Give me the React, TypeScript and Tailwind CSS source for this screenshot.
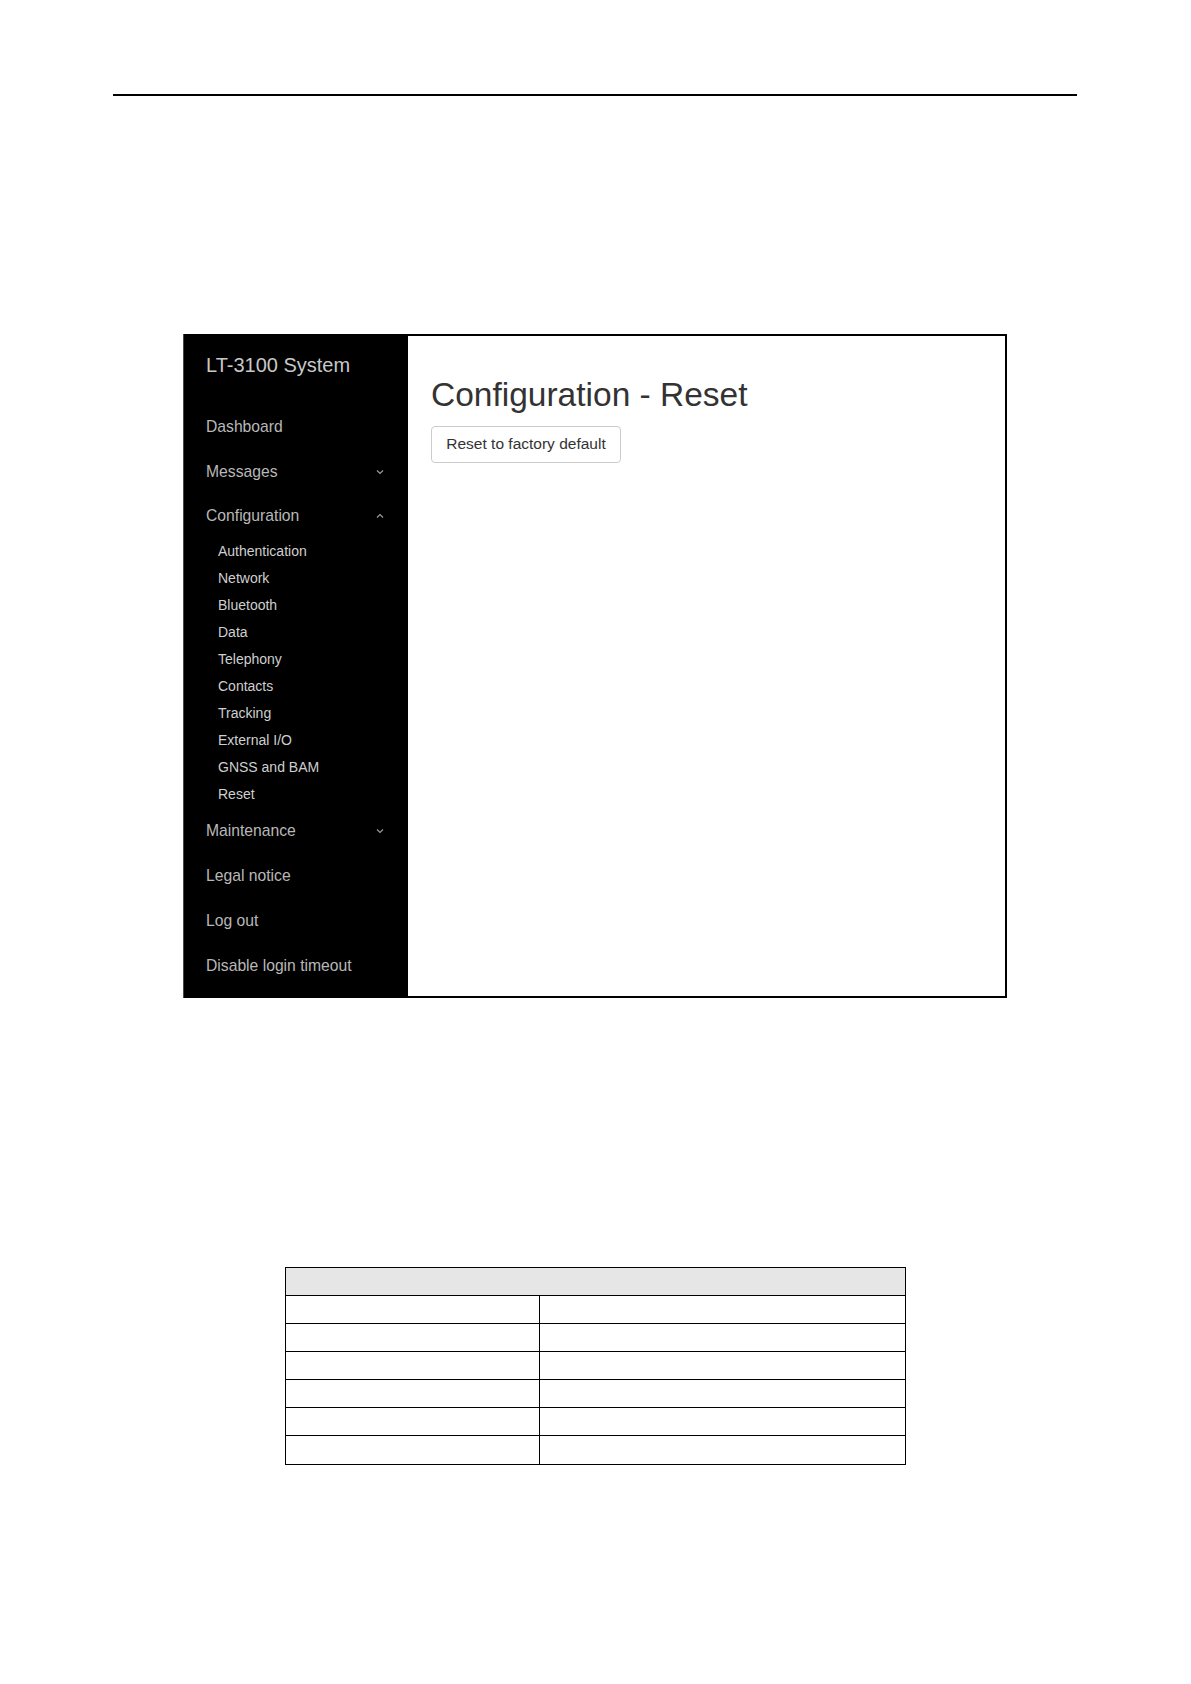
import React from "react";

const font = { fontFamily: '"Liberation Sans", Arial, sans-serif' };

function ChevronDown() {
  return (
    <svg width="8" height="6" viewBox="0 0 8 6" className="shrink-0">
      <path d="M1 1.5 L4 4.5 L7 1.5" fill="none" stroke="#9a9a9a" strokeWidth="1.2" />
    </svg>
  );
}
function ChevronUp() {
  return (
    <svg width="8" height="6" viewBox="0 0 8 6" className="shrink-0">
      <path d="M1 4.5 L4 1.5 L7 4.5" fill="none" stroke="#9a9a9a" strokeWidth="1.2" />
    </svg>
  );
}

function MainItem({ label, chevron, h = "h-[45px]" }: { label: string; chevron?: "up" | "down"; h?: string }) {
  return (
    <div className={`flex items-center justify-between pl-[22px] pr-[24px] ${h} text-[15.7px] text-[#b8b8b8]`}>
      <span>{label}</span>
      {chevron === "down" && <ChevronDown />}
      {chevron === "up" && <ChevronUp />}
    </div>
  );
}

const subItems = [
  "Authentication",
  "Network",
  "Bluetooth",
  "Data",
  "Telephony",
  "Contacts",
  "Tracking",
  "External I/O",
  "GNSS and BAM",
  "Reset",
];

export default function App() {
  return (
    <div className="w-[1191px] h-[1684px] bg-white flex flex-col" style={font}>
      <div className="mt-[94px] ml-[113px] w-[964px] h-[2px] bg-black" />

      <div className="mt-[238px] ml-[183px] w-[824px] h-[664px] flex">
        <div className="w-[225px] h-full bg-black border-l border-[#4a4a4a] flex flex-col">
          <div className="pt-[19px] pl-[22px] text-[20px] leading-[24px] text-[#c8c8c8]">LT-3100 System</div>
          <div className="mt-[27px]">
            <MainItem label="Dashboard" />
            <MainItem label="Messages" chevron="down" />
            <MainItem label="Configuration" chevron="up" h="h-[44px]" />
            <div className="flex flex-col">
              {subItems.map((s) => (
                <div key={s} className="h-[27px] flex items-center pl-[34px] text-[14px] text-[#cfcfcf]">
                  {s}
                </div>
              ))}
            </div>
            <MainItem label="Maintenance" chevron="down" />
            <MainItem label="Legal notice" />
            <MainItem label="Log out" />
            <MainItem label="Disable login timeout" />
          </div>
        </div>
        <div className="flex-1 h-full bg-white border-t-2 border-r-2 border-b-2 border-black pl-[23px]">
          <h1 className="mt-[42px] text-[33.5px] leading-none text-[#333333]">Configuration - Reset</h1>
          <button className="mt-[14px] w-[190px] h-[37px] border border-[#cccccc] rounded-[4px] bg-white text-[15.5px] text-[#333333] flex items-center justify-center">
            Reset to factory default
          </button>
        </div>
      </div>

      <div className="mt-[269px] ml-[285px] w-[621px] border border-black">
        <div className="h-[28px] bg-[#e6e6e6] border-b border-black" />
        {[0, 1, 2, 3, 4, 5].map((i) => (
          <div key={i} className={`flex h-[28px] ${i < 5 ? "border-b border-black" : ""}`}>
            <div className="w-[254px] border-r border-black" />
            <div className="flex-1" />
          </div>
        ))}
      </div>
    </div>
  );
}
